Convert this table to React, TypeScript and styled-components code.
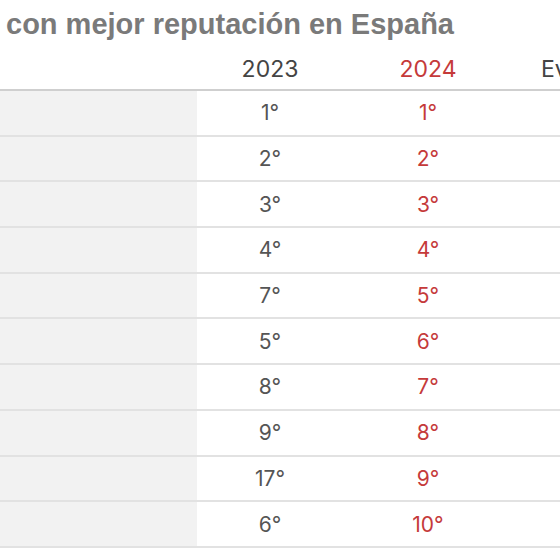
import React from "react";
import styled, { createGlobalStyle } from "styled-components";

const Global = createGlobalStyle`
  html, body { margin: 0; padding: 0; background: #ffffff; }
  body { width: 560px; height: 560px; overflow: hidden; }
`;

const Page = styled.div`
  width: 560px;
  height: 560px;
  overflow: hidden;
  background: #ffffff;
`;

const Title = styled.h2`
  margin: 0;
  padding: 9px 0 0 6px;
  height: 38px;
  box-sizing: border-box;
  font-family: "Liberation Sans", Arial, sans-serif;
  font-weight: 700;
  font-size: 29px;
  line-height: 30px;
  color: #7a7a7a;
  white-space: nowrap;
`;

const Table = styled.div`
  display: grid;
  grid-template-columns: 197px 146px 170px 150px;
  width: 663px;
`;

const HeadCell = styled.div<{ $red?: boolean; $left?: boolean }>`
  height: 53px;
  box-sizing: border-box;
  display: flex;
  align-items: flex-end;
  justify-content: ${(p) => (p.$left ? "flex-start" : "center")};
  padding: 0 0 6px ${(p) => (p.$left ? "28px" : "0")};
  font-family: "Inter", "Open Sans", sans-serif;
  font-size: 23px;
  font-weight: 400;
  color: ${(p) => (p.$red ? "#c53a3a" : "#444444")};
  border-bottom: 2px solid #cfcfcf;
`;

const NameCell = styled.div`
  height: 45.7px;
  box-sizing: border-box;
  background: #f2f2f2;
  border-bottom: 2px solid #e2e2e2;
`;

const Cell = styled.div<{ $red?: boolean }>`
  height: 45.7px;
  box-sizing: border-box;
  display: flex;
  align-items: center;
  justify-content: center;
  font-family: "Inter", "Open Sans", sans-serif;
  font-size: 21px;
  font-weight: 400;
  color: ${(p) => (p.$red ? "#c53a3a" : "#555555")};
  border-bottom: 2px solid #e2e2e2;
  background: #ffffff;
`;

const rows: [string, string][] = [
  ["1°", "1°"],
  ["2°", "2°"],
  ["3°", "3°"],
  ["4°", "4°"],
  ["7°", "5°"],
  ["5°", "6°"],
  ["8°", "7°"],
  ["9°", "8°"],
  ["17°", "9°"],
  ["6°", "10°"],
];

export default function App() {
  return (
    <Page>
      <Global />
      <Title>con mejor reputación en España</Title>
      <Table>
        <HeadCell />
        <HeadCell>2023</HeadCell>
        <HeadCell $red>2024</HeadCell>
        <HeadCell $left>Evolución</HeadCell>
        {rows.map(([a, b], i) => (
          <React.Fragment key={i}>
            <NameCell />
            <Cell>{a}</Cell>
            <Cell $red>{b}</Cell>
            <Cell />
          </React.Fragment>
        ))}
      </Table>
    </Page>
  );
}
